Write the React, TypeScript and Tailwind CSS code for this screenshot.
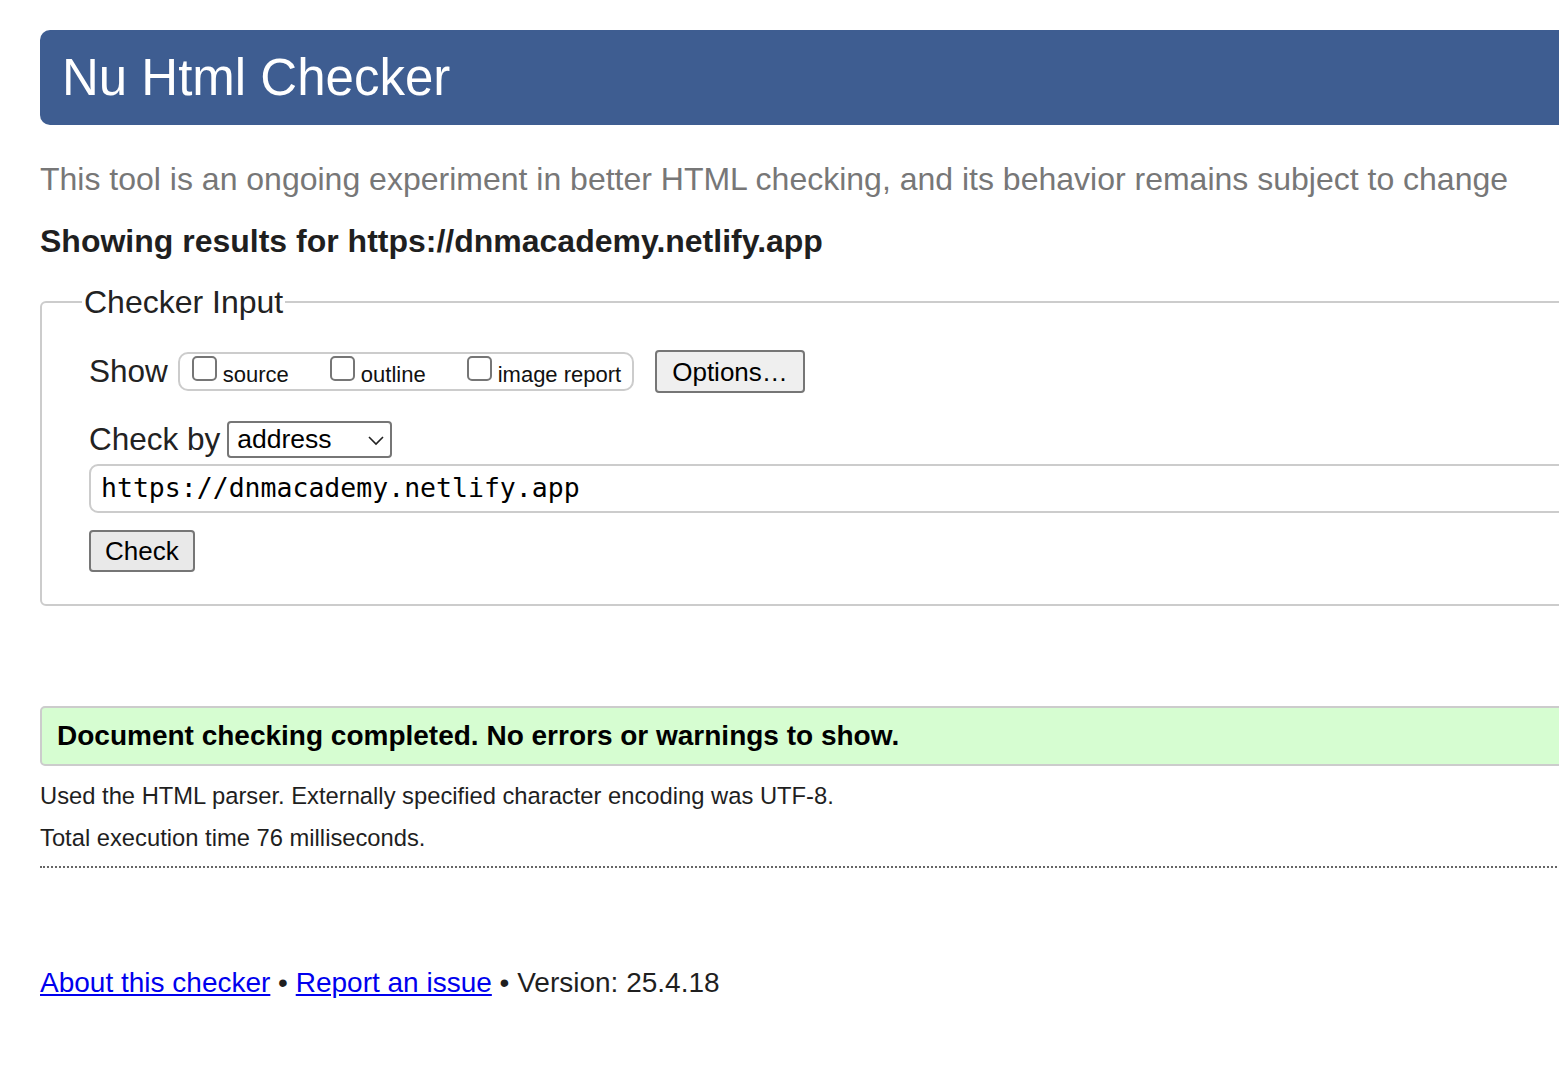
import React from 'react';

const sans = { fontFamily: '"Liberation Sans", Arial, Helvetica, sans-serif' };

const Checkbox: React.FC<{ label: string }> = ({ label }) => (
  <label className="flex items-center gap-[6px]">
    <span className="block w-[25px] h-[25px] rounded-[5px] border-2 border-[#767676] bg-white mb-[6px]" />
    <span className="text-[22px] text-[#111] leading-none mt-[6px]">{label}</span>
  </label>
);

export default function App() {
  return (
    <div className="w-full min-h-screen overflow-hidden bg-white text-[#222]" style={sans}>
      <div className="ml-10 w-[1600px] pt-[30px]">
        {/* header bar */}
        <div className="h-[95px] bg-[#3e5d91] rounded-[10px] flex items-center pl-[22px]">
          <h1 className="text-[51px] text-white leading-none">Nu Html Checker</h1>
        </div>

        <p className="mt-[38px] text-[32px] text-[#777] leading-none">
          This tool is an ongoing experiment in better HTML checking, and its behavior remains subject to change
        </p>

        <p className="mt-[30px] text-[32px] font-bold text-[#1f1f1f] leading-none">
          Showing results for https://dnmacademy.netlify.app
        </p>

        {/* checker input fieldset */}
        <fieldset className="mt-[29px] border-2 border-[#cccccc] rounded-[6px] pl-[47px] pt-[20px] pb-[32px]">
          <legend className="-ml-[7px] px-[2px] text-[32px] text-[#222] leading-none">Checker Input</legend>

          <div className="flex items-center mt-[12px]">
            <span className="text-[31.5px] leading-none mr-[10px]">Show</span>
            <div className="flex items-center gap-[41px] h-[39px] border-2 border-[#cccccc] rounded-[10px] pl-[12px] pr-[11px]">
              <Checkbox label="source" />
              <Checkbox label="outline" />
              <Checkbox label="image report" />
            </div>
            <button className="ml-[21px] h-[43px] px-[15px] bg-[#efefef] border-2 border-[#767676] rounded-[4px] text-[26px] text-black leading-none">
              Options…
            </button>
          </div>

          <div className="flex items-center mt-[28px]">
            <span className="text-[31.5px] leading-none mr-[7px]">Check by</span>
            <div className="flex items-center justify-between w-[165px] h-[37px] border-2 border-[#767676] rounded-[4px] pl-[8px] pr-[5px] text-[26.5px] text-black leading-none">
              <span>address</span>
              <svg width="18" height="12" viewBox="0 0 18 12" fill="none" stroke="#222" strokeWidth="1.6">
                <path d="M2 3l7 7 7-7" />
              </svg>
            </div>
          </div>

          <div className="mt-[6px] h-[49px] border-2 border-[#cccccc] rounded-[9px] flex items-center pl-[10px]">
            <span className="text-[26.5px] text-black leading-none" style={{ fontFamily: '"DejaVu Sans Mono", Menlo, monospace' }}>
              https://dnmacademy.netlify.app
            </span>
          </div>

          <button className="mt-[17px] h-[42px] px-[14px] bg-[#e9e9e9] border-2 border-[#767676] rounded-[4px] text-[26px] text-black leading-none">
            Check
          </button>
        </fieldset>

        {/* result */}
        <div className="mt-[100px] h-[60px] bg-[#d6fdd1] border-2 border-[#cccccc] rounded-[5px] flex items-center pl-[15px]">
          <span className="text-[28px] font-bold text-black leading-none">
            Document checking completed. No errors or warnings to show.
          </span>
        </div>

        <p className="mt-[18px] text-[23.75px] text-[#1f1f1f] leading-none">
          Used the HTML parser. Externally specified character encoding was UTF-8.
        </p>
        <p className="mt-[18px] text-[23.75px] text-[#1f1f1f] leading-none">Total execution time 76 milliseconds.</p>

        <div className="mt-[16px] border-t-2 border-dotted border-[#666]" />

        <p className="mt-[101px] text-[28px] text-[#1f1f1f] leading-none">
          <a href="#" className="text-[#0000ee] underline">About this checker</a>
          {' • '}
          <a href="#" className="text-[#0000ee] underline">Report an issue</a>
          {' • Version: 25.4.18'}
        </p>
      </div>
    </div>
  );
}
